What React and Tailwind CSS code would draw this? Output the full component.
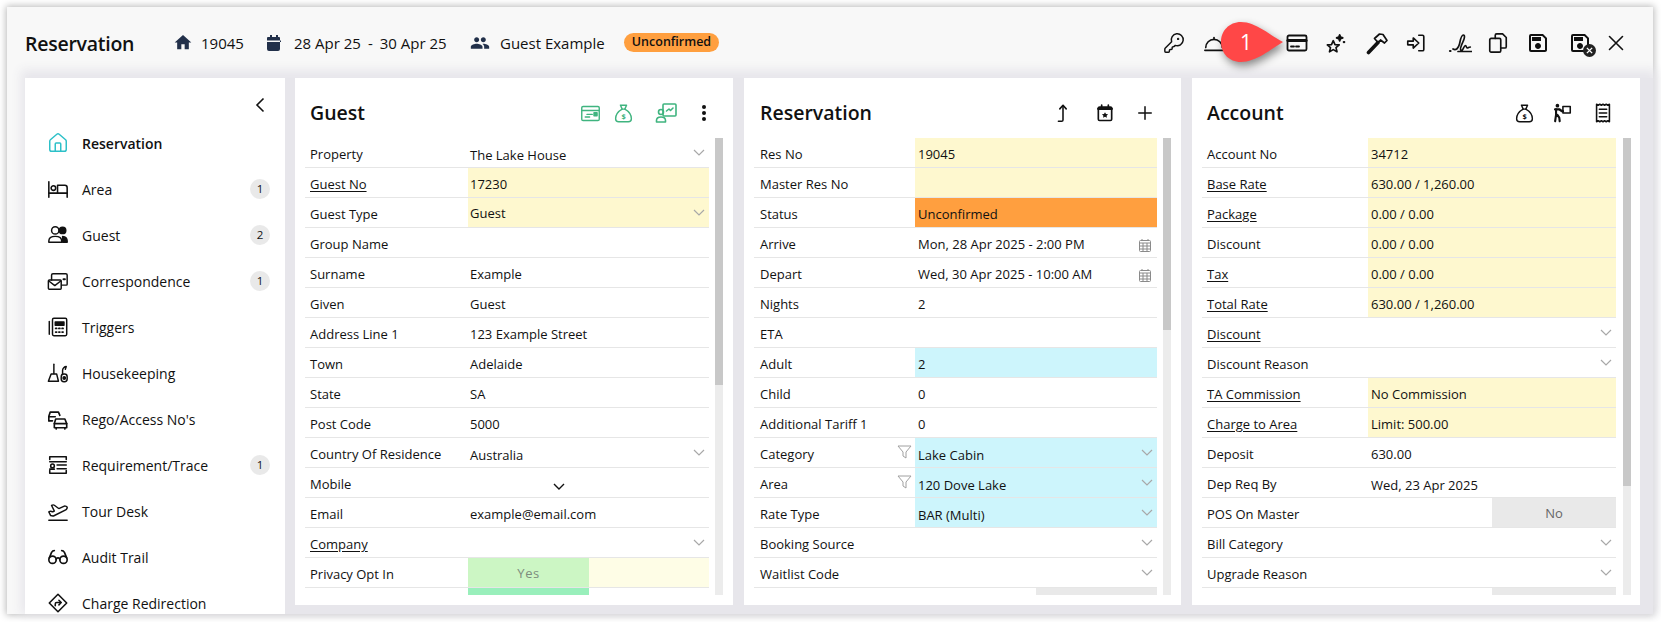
import React from "react";
import { KeyRound, Home, PlaneTakeoff, Glasses } from "lucide-react";
import { MdHome, MdPeople, MdOutlineSave } from "react-icons/md";

const S = ({ size = 22, children, className = "", vb = "0 0 24 24", sw = 1.8 }) => (
  <svg width={size} height={size} viewBox={vb} fill="none" stroke="currentColor" strokeWidth={sw} strokeLinecap="round" strokeLinejoin="round" className={className}>
    {children}
  </svg>
);

const Bell = () => <S><path d="M3 17a9 9 0 0 1 18 0" /><path d="M2 20h20" /><path d="M12 8V6" /></S>;
const Card = () => <S size={24}><rect x="2.5" y="4.5" width="19" height="15" rx="1.5" /><path d="M3 9.5h18" strokeWidth="3.2" /><path d="M6 15.5h3M11 15.5h3" /></S>;
const Stars = () => <S><path d="M9 9.5l1.9 4.2 4.6.4-3.5 3 1.1 4.5L9 19.2l-4.1 2.4L6 17.1l-3.5-3 4.6-.4z" /><path d="M16 3l1 2.4 2.4 1-2.4 1-1 2.4-1-2.4-2.4-1 2.4-1z" fill="currentColor" /><path d="M20.5 11h.5" strokeWidth="2.4" /></S>;
const HammerIcon = () => <S size={24} sw={1.7}><path d="M3.5 21.5L13 11.5" strokeWidth="3.6" /><path d="M9.5 7.5l5-4.5 3.5.5 4 6-2.5 2.5-4-3-2.5 2.5z" /></S>;
const SignIn = () => <S><path d="M3 10h6V6.5l6 5.5-6 5.5V14H3z" /><path d="M15 3.5h4a1.5 1.5 0 0 1 1.5 1.5v14a1.5 1.5 0 0 1-1.5 1.5h-4" /></S>;
const Signature = () => <S size={28} sw={1.7}><path d="M5 18c3 2 5.500-1 6.500-5 .8-3.200 1.500-9 3.800-9 2 0 1 4 0 6-1.500 3.200-4 8-2.300 9.500 1.800 1.200 2.800-5 4.500-5 1 0 .5 2.500 1.800 2.500 1 0 1.500-1 3-1" /><path d="M10 20.500h13.500" /><path d="M2 20h.5" strokeWidth="2.200" /></S>;
const Copy = () => <S><rect x="3" y="7" width="12" height="15" rx="1.500" /><path d="M9 7V3.500A1.500 1.500 0 0 1 10.500 2H17l4 4v10a1.500 1.500 0 0 1-1.500 1.500H15" /></S>;
const SaveX = () => (
  <span className="relative block h-6 w-6">
    <MdOutlineSave size={24} />
    <span className="absolute bottom-[-2px] right-[-4px] flex h-[13px] w-[13px] items-center justify-center rounded-full bg-[#222] text-white">
      <svg width="7" height="7" viewBox="0 0 8 8" stroke="currentColor" strokeWidth="1.600"><path d="M1 1l6 6M7 1L1 7" /></svg>
    </span>
  </span>
);
const Close = () => <S size={24} sw={1.600}><path d="M5.500 5.500l13 13M18.500 5.500l-13 13" /></S>;
const CalFill = ({ size = 16 }) => (
  <svg width={size} height={size} viewBox="0 0 16 16" fill="currentColor">
    <path d="M4 0h2v2h4V0h2v2h1a1 1 0 0 1 1 1v11a2 2 0 0 1-2 2H3a2 2 0 0 1-2-2V3a1 1 0 0 1 1-1h2zM1 5.500v1.500h14V5.500z" fillRule="evenodd" />
  </svg>
);
const Bag = ({ size = 21 }) => <S size={size} sw={1.600}><path d="M8.500 2.500h7l-2 4.500h-3z" /><path d="M10.500 7C6 9.500 3 14 3 18c0 2.500 1.500 3.500 3.500 3.500h11c2 0 3.500-1 3.500-3.500 0-4-3-8.500-7.500-11" /><text x="12" y="18" fontSize="8.500" textAnchor="middle" stroke="none" fill="currentColor" fontWeight="700" fontFamily="Open Sans">$</text></S>;
const CardChart = () => <S size={21} sw={1.600}><rect x="2" y="4" width="20" height="16" rx="1.500" /><path d="M2.500 8.500h19" /><path d="M6 16h5M8 13h6" /><rect x="16" y="11" width="3.500" height="3.500" fill="currentColor" /></S>;
const PersonChart = () => <S size={24} sw={1.600}><rect x="9" y="3" width="13" height="12" rx="1" /><path d="M12.500 10l2.500-2 1.500 1.500L19 7" /><circle cx="7" cy="11" r="2.500" /><path d="M2.500 21v-1.500C2.500 17 5 16 7 16s4.500 1 4.500 3.500V21z" /></S>;
const Dots = () => <svg width="6" height="18" viewBox="0 0 6 18" fill="currentColor"><circle cx="3" cy="3" r="2" /><circle cx="3" cy="9" r="2" /><circle cx="3" cy="15" r="2" /></svg>;
const UpArrow = () => <S size={22} sw={1.700}><path d="M7 21h3.500c1 0 1.500-.5 1.500-1.500V4" /><path d="M8.500 7.500L12 3.500l3.500 4" /></S>;
const CalStar = () => (
  <S size={20} sw={2}><rect x="4" y="5" width="16" height="16" rx="1.500" /><path d="M8 2.500V6M16 2.500V6" /><path d="M4 7h16" strokeWidth="3" /><path d="M12 11l1.200 2.300 2.500.3-1.800 1.700.4 2.500-2.300-1.200-2.300 1.200.4-2.500-1.800-1.700 2.500-.3z" fill="currentColor" stroke="none" /></S>
);
const Plus = () => <S size={20} sw={1.800}><path d="M12 4.500v15M4.500 12h15" /></S>;
const Porter = () => <S size={22} sw={1.700}><circle cx="7" cy="4" r="2" fill="currentColor" stroke="none" /><path d="M4.500 8h4.500l3 2h1" strokeWidth="2.600" /><path d="M5.500 8v6l-1 7M7 14l2 3 .5 4" strokeWidth="2.300" /><rect x="13" y="5" width="8" height="7" /></S>;
const Receipt = () => <S size={22} sw={1.700}><path d="M5 2.500l1.750 1 1.750-1 1.750 1L12 2.500l1.750 1 1.750-1 1.750 1 1.750-1v19l-1.750-1-1.750 1-1.750-1-1.750 1-1.750-1-1.750 1-1.750-1-1.750 1z" /><path d="M8 8h8M8 12h8M8 16h8" /></S>;

const Bed = () => <S sw={1.700}><path d="M2 4v17" /><path d="M2 16.500h20V21" /><circle cx="7" cy="11" r="2.500" /><path d="M11.500 16.500V8h8a2.500 2.500 0 0 1 2.500 2.500v6" /></S>;
const Person2 = () => <S sw={1.600}><circle cx="9" cy="7" r="4" /><circle cx="17" cy="7" r="3.500" fill="currentColor" /><path d="M2 20v-1.500C2 15 5 13.500 9 13.500s7 1.500 7 5V20z" /><path d="M17 13.500c3 .3 5 1.800 5 5V20h-5z" fill="currentColor" /></S>;
const Mail = () => <S sw={1.600}><rect x="1.500" y="11" width="14" height="10" rx="1" /><path d="M2 12l6.500 5L15 12" /><path d="M5 11V5.500A1.500 1.500 0 0 1 6.500 4h14A1.500 1.500 0 0 1 22 5.500V15.500a1 1 0 0 1-1 1h-5" /><path d="M18 10h1.500" strokeWidth="2.200" /></S>;
const Calc = () => <S sw={1.600}><rect x="6" y="2.500" width="15.500" height="19" rx="1.500" /><path d="M2.500 6v14" /><path d="M9 6.500h9.500v3.500H9z" fill="currentColor" /><path d="M9.500 13.500h1M13 13.500h1M16.500 13.500h1M9.500 17.500h1M13 17.500h1M16.500 17.500h1" strokeWidth="2" /></S>;
const Broom = () => <S sw={1.600}><path d="M7.500 2.500v10" /><path d="M4.500 13h6l2 8H1.500z" /><rect x="15.500" y="13" width="6.500" height="8.500" rx="3" /><path d="M17 13V9c0-2 2-4 4-4l-1 3" /><circle cx="18.800" cy="17.500" r="1.300" fill="currentColor" /></S>;
const Cars = () => <S sw={1.800}><path d="M2 14V9l1.500-4.500h9L14 8" /><path d="M2 9.500h7" /><path d="M2 14h4" /><path d="M8 17l1.500-5h10L21.500 17v4.500H8z" /><path d="M8 17h13.500" /><path d="M10 21.500V23M19.500 21.500V23" /></S>;
const ReqList = () => <S sw={1.700}><path d="M3 3h18M3 21h18M3 3v3M3 18v3M21 3v3M21 18v3" /><path d="M3 8.500h18M11 12h10M11 16h10" /><circle cx="6" cy="13" r="2" /><path d="M3 16.500h5" /></S>;
const Redirect = () => <S sw={1.700}><path d="M12 2.500L21.500 12 12 21.500 2.500 12z" /><path d="M9 15v-2c0-1 .5-1.500 1.500-1.500H15" /><path d="M13 9l2.500 2.500L13 14" /></S>;

const ChevGray = ({ dark }) => (
  <svg width="12" height="7" viewBox="0 0 12 7" fill="none" stroke={dark ? "#111" : "#a8a8a8"} strokeWidth={dark ? 1.400 : 1.200}><path d="M1 1l5 5 5-5" /></svg>
);
const Filter = () => (
  <svg width="15" height="14" viewBox="0 0 15 14" fill="none" stroke="#a0a0a0" strokeWidth="1"><path d="M1 1h13L9 7v6l-3-2V7z" /></svg>
);
const CalGray = () => (
  <svg width="12" height="13" viewBox="0 0 12 13" fill="none" stroke="#8a8a8a" strokeWidth="1"><rect x=".5" y="1.500" width="11" height="11" rx="1" /><path d="M.5 4h11M.5 7h11M.5 10h11M4 4v8M8 4v8" /><path d="M3 0v2M9 0v2" /></svg>
);

const navItems = [
  { t: "Reservation", i: <Home size={22} strokeWidth={1.600} className="text-[#2cc0c8]" />, active: true },
  { t: "Area", i: <Bed />, b: 1 },
  { t: "Guest", i: <Person2 />, b: 2 },
  { t: "Correspondence", i: <Mail />, b: 1 },
  { t: "Triggers", i: <Calc /> },
  { t: "Housekeeping", i: <Broom /> },
  { t: "Rego/Access No's", i: <Cars /> },
  { t: "Requirement/Trace", i: <ReqList />, b: 1 },
  { t: "Tour Desk", i: <PlaneTakeoff size={22} strokeWidth={1.600} /> },
  { t: "Audit Trail", i: <Glasses size={22} strokeWidth={1.800} /> },
  { t: "Charge Redirection", i: <Redirect /> },
];

const guest = [
  { l: "Property", v: "The Lake House", c: true, low: true },
  { l: "Guest No", v: "17230", u: true, bg: "y" },
  { l: "Guest Type", v: "Guest", c: true, bg: "y", high: true },
  { l: "Group Name" },
  { l: "Surname", v: "Example" },
  { l: "Given", v: "Guest" },
  { l: "Address Line 1", v: "123 Example Street" },
  { l: "Town", v: "Adelaide" },
  { l: "State", v: "SA" },
  { l: "Post Code", v: "5000" },
  { l: "Country Of Residence", v: "Australia", c: true, low: true },
  { l: "Mobile", mobile: true },
  { l: "Email", v: "example@email.com" },
  { l: "Company", u: true, c: true },
  { l: "Privacy Opt In", yes: true },
];

const res = [
  { l: "Res No", v: "19045", bg: "y" },
  { l: "Master Res No", bg: "y" },
  { l: "Status", v: "Unconfirmed", bg: "o" },
  { l: "Arrive", v: "Mon, 28 Apr 2025 - 2:00 PM", cal: true },
  { l: "Depart", v: "Wed, 30 Apr 2025 - 10:00 AM", cal: true },
  { l: "Nights", v: "2" },
  { l: "ETA" },
  { l: "Adult", v: "2", bg: "b" },
  { l: "Child", v: "0" },
  { l: "Additional Tariff 1", v: "0" },
  { l: "Category", v: "Lake Cabin", bg: "b", c: true, f: true, low: true },
  { l: "Area", v: "120 Dove Lake", bg: "b", c: true, f: true, low: true },
  { l: "Rate Type", v: "BAR (Multi)", bg: "b", c: true, low: true },
  { l: "Booking Source", c: true },
  { l: "Waitlist Code", c: true },
];

const acc = [
  { l: "Account No", v: "34712", bg: "y" },
  { l: "Base Rate", v: "630.00 / 1,260.00", u: true, bg: "y" },
  { l: "Package", v: "0.00 / 0.00", u: true, bg: "y" },
  { l: "Discount", v: "0.00 / 0.00", bg: "y" },
  { l: "Tax", v: "0.00 / 0.00", u: true, bg: "y" },
  { l: "Total Rate", v: "630.00 / 1,260.00", u: true, bg: "y" },
  { l: "Discount", u: true, c: true },
  { l: "Discount Reason", c: true },
  { l: "TA Commission", v: "No Commission", u: true, bg: "y" },
  { l: "Charge to Area", v: "Limit: 500.00", u: true, bg: "y" },
  { l: "Deposit", v: "630.00" },
  { l: "Dep Req By", v: "Wed, 23 Apr 2025", low: true },
  { l: "POS On Master", no: true },
  { l: "Bill Category", c: true },
  { l: "Upgrade Reason", c: true },
];

const bgs = { y: "bg-[#fef8cf]", o: "bg-[#ff9f3f]", b: "bg-[#cdf5fc]" };

function Row({ r, labelW, labelPl, valPl }) {
  return (
    <div className="flex h-[30px] shrink-0 border-b border-[#e6e6e6] text-[13px] text-[#111]">
      <div className={`flex items-center justify-between pr-[3px] pt-[4px] ${labelW} ${labelPl}`}>
        <span className={r.u ? "underline underline-offset-2" : ""}>{r.l}</span>
        {r.f && <span className="-mt-[6px] flex"><Filter /></span>}
      </div>
      {r.yes ? (
        <div className="flex flex-1">
          <div className="flex w-[121px] items-center justify-center bg-[#ccf6c4] pt-[2px] tracking-[0.5px] text-[#7d8c7d]">Yes</div>
          <div className="flex-1 bg-[#fefde6]" />
        </div>
      ) : r.no ? (
        <div className="flex flex-1 justify-end">
          <div className="flex w-[124px] items-center justify-center bg-[#e9e9e9] pt-[2px] text-[#666]">No</div>
        </div>
      ) : r.mobile ? (
        <div className="flex flex-1 items-center pl-[85px] pt-[8px]"><ChevGray dark /></div>
      ) : (
        <div className={`flex flex-1 items-center justify-between pr-[4px] pt-[4px] ${valPl} ${r.bg ? bgs[r.bg] : ""}`}>
          <span className={r.low ? "pt-[2px]" : r.high ? "-mt-[2px]" : ""}>{r.v}</span>
          {r.c && <span className="-mt-[5px] flex"><ChevGray /></span>}
          {r.cal && <span className="mr-[2px] flex pt-[2px]"><CalGray /></span>}
        </div>
      )}
    </div>
  );
}

function Panel({ title, icons, rows, w, listW, labelW, labelPl, valPl, stripW, stripC, stripR, thumb, gap }) {
  return (
    <section className={`flex h-[527px] shrink-0 flex-col bg-white pl-[10px] ${w}`}>
      <header className={`flex h-[60px] shrink-0 items-center pt-[10px] ${listW}`}>
        <h2 className={`text-[19.500px] font-semibold text-[#111] ${labelPl}`}>{title}</h2>
      </header>
      {icons}
      <div className={`flex h-[457px] ${gap}`}>
        <div className={`flex flex-col overflow-hidden ${listW}`}>
          {rows.map((r, i) => (
            <Row key={i} r={r} labelW={labelW} labelPl={labelPl} valPl={valPl} />
          ))}
          <div className="flex h-[7px] shrink-0">
            <div className={stripR} />
            <div className={`${stripW} ${stripC}`} />
          </div>
        </div>
        <div className="h-full w-2 shrink-0 bg-[#ececec]">
          <div className={`w-full bg-[#c8c8c8] ${thumb}`} />
        </div>
      </div>
    </section>
  );
}

const IconBar = ({ children, cls }) => (
  <div className={`-mt-[60px] flex h-[60px] shrink-0 items-center pt-[10px] ${cls}`}>{children}</div>
);

export default function App() {
  return (
    <div className="h-[622px] w-[1661px] overflow-hidden bg-white pl-[7px] pt-[7px] font-['Open_Sans',sans-serif] text-[#111]">
      <div className="flex h-[607px] w-[1646px] flex-col bg-[#f8f8f8] shadow-[0_0_7px_1px_rgba(0,0,0,0.28)]">
        <header className="relative flex h-[71px] shrink-0 items-center pl-[18px] pr-[25px]">
          <h1 className="w-[148px] pt-[2px] text-[19.500px] font-semibold tracking-[-0.25px]">Reservation</h1>
          <span className="flex w-5 justify-center text-[#22304a]"><MdHome size={21} /></span>
          <span className="ml-2 w-[63px] pt-[2px] text-[15px]">19045</span>
          <span className="flex w-5 justify-center text-[#22304a]"><CalFill /></span>
          <span className="ml-[10px] flex w-[176px] gap-[7px] pt-[2px] text-[15px]">
            <span>28 Apr 25</span><span>-</span><span>30 Apr 25</span>
          </span>
          <span className="flex w-5 justify-center text-[#22304a]"><MdPeople size={22} /></span>
          <span className="ml-[10px] w-[124px] pt-[2px] text-[15px]">Guest Example</span>
          <span className="flex h-[19px] w-[95px] items-center justify-center rounded-full bg-[#ff9f3f] text-[12.500px] font-semibold">Unconfirmed</span>

          <div className="ml-auto flex items-center">
            <span className="flex w-6 justify-center"><KeyRound size={22} strokeWidth={1.600} /></span>
            <span className="ml-[16px] flex w-6 justify-center"><Bell /></span>
            <span className="ml-[59px] flex w-6 justify-center"><Card /></span>
            <span className="ml-[15px] flex w-6 justify-center"><Stars /></span>
            <span className="ml-[17px] flex w-6 justify-center"><HammerIcon /></span>
            <span className="ml-[15px] flex w-6 justify-center"><SignIn /></span>
            <span className="ml-[20px] flex w-6 justify-center"><Signature /></span>
            <span className="ml-[14px] flex w-6 justify-center"><Copy /></span>
            <span className="ml-[16px] flex w-6 justify-center"><MdOutlineSave size={24} /></span>
            <span className="ml-[18px] flex w-6 justify-center"><SaveX /></span>
            <span className="ml-[12px] flex w-6 justify-center"><Close /></span>
          </div>

          <div className="absolute left-[1214px] top-[15px] h-[40px] w-[62px]">
            <svg width="62" height="40" viewBox="0 0 62 40" className="drop-shadow-[2px_4px_4px_rgba(0,0,0,0.45)]">
              <path d="M62 20C50 14 35 0 20 0C8 0 0 9 0 20C0 31 8 40 20 40C35 40 50 27 62 20Z" fill="#ff4747" />
            </svg>
            <span className="absolute left-[17px] top-[6px] w-[16px] text-center text-[21px] leading-[28px] text-white">1</span>
          </div>
        </header>

        <div className="ml-[18px] flex h-[536px] shrink-0 items-start bg-[#e7e6eb] pr-[13px] shadow-[0_-4px_10px_4px_#e7e6eb]">
          <aside className="flex h-[536px] w-[260px] shrink-0 flex-col overflow-hidden bg-white">
            <div className="flex h-[42px] shrink-0 justify-end pr-[20px] pt-[19px]">
              <svg width="10" height="16" viewBox="0 0 10 16" fill="none" stroke="#111" strokeWidth="1.600"><path d="M8.500 1.500L2 8l6.500 6.500" /></svg>
            </div>
            {navItems.map((n) => (
              <div key={n.t} className="flex h-[46px] shrink-0 items-center pl-[22px] pr-[15px]">
                <span className="flex w-[22px] justify-center">{n.i}</span>
                <span className={`ml-[13px] flex-1 text-[14px] ${n.active ? "font-semibold" : ""}`}>{n.t}</span>
                {n.b && <span className="flex h-5 w-5 items-center justify-center rounded-full bg-[#e9e9e9] text-[11.500px]">{n.b}</span>}
              </div>
            ))}
          </aside>

          <Panel
            title="Guest" rows={guest} w="ml-[10px] w-[438px]" listW="w-[404px]" labelW="w-[163px]" labelPl="pl-[5px]" valPl="pl-[2px]" gap="gap-[6px]"
            stripR="w-[163px]" stripW="w-[121px]" stripC="bg-[#99efbb]" thumb="h-[247px]"
            icons={
              <IconBar cls="w-[410px] text-[#3fb47f]">
                <span className="ml-[274px] flex w-6 justify-center"><CardChart /></span>
                <span className="ml-[10px] flex w-6 justify-center"><Bag /></span>
                <span className="ml-[19px] flex w-6 justify-center"><PersonChart /></span>
                <span className="ml-[14px] flex w-6 justify-center text-[#111]"><Dots /></span>
              </IconBar>
            }
          />
          <Panel
            title="Reservation" rows={res} w="ml-[11px] w-[437px]" listW="w-[403px]" labelW="w-[161px]" labelPl="pl-[6px]" valPl="pl-[3px]" gap="gap-[6px]"
            stripR="w-[282px]" stripW="w-[121px]" stripC="bg-[#e9e9e9]" thumb="h-[192px]"
            icons={
              <IconBar cls="w-[410px] text-[#111]">
                <span className="ml-[297px] flex w-6 justify-center"><UpArrow /></span>
                <span className="ml-[18px] flex w-6 justify-center"><CalStar /></span>
                <span className="ml-[16px] flex w-6 justify-center"><Plus /></span>
              </IconBar>
            }
          />
          <Panel
            title="Account" rows={acc} w="ml-[11px] w-[448px]" listW="w-[414px]" labelW="w-[166px]" labelPl="pl-[5px]" valPl="pl-[3px]" gap="gap-[7px]"
            stripR="w-[290px]" stripW="w-[124px]" stripC="bg-[#e9e9e9]" thumb="h-[348px]"
            icons={
              <IconBar cls="w-[425px] text-[#111]">
                <span className="ml-[310px] flex w-6 justify-center"><Bag /></span>
                <span className="ml-[14px] flex w-6 justify-center"><Porter /></span>
                <span className="ml-[17px] flex w-6 justify-center"><Receipt /></span>
              </IconBar>
            }
          />
        </div>
      </div>
    </div>
  );
}
